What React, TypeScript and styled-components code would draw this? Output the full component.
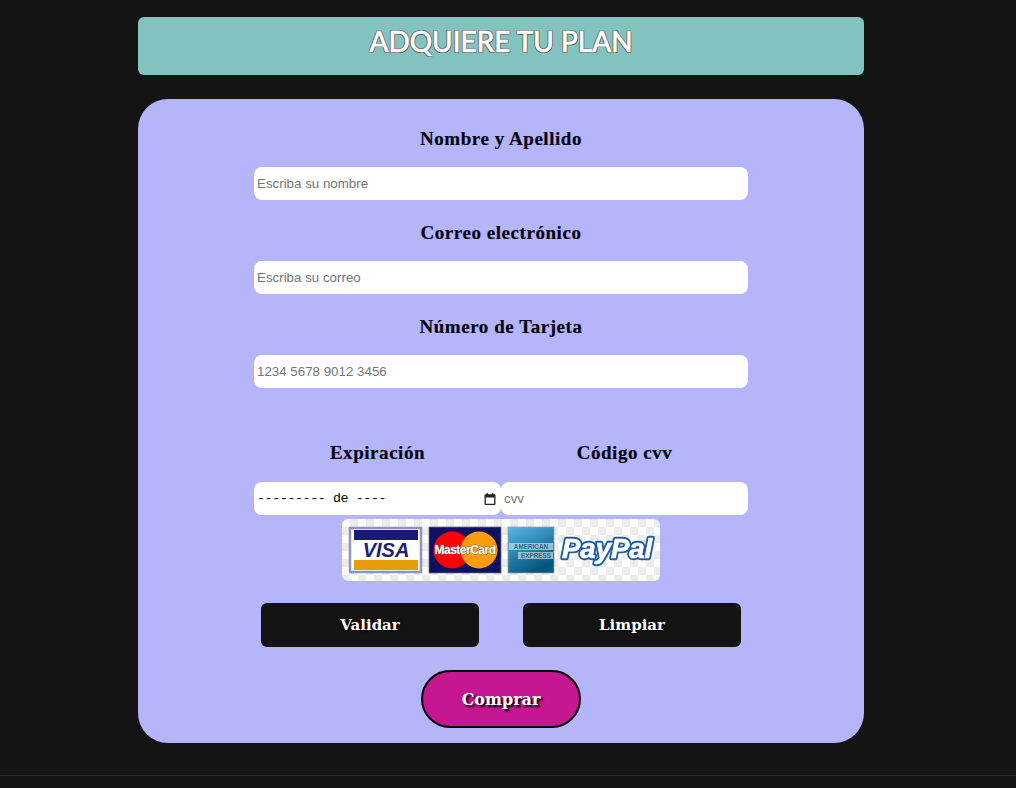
import styled, { createGlobalStyle } from 'styled-components';

const GlobalStyle = createGlobalStyle`
  html, body {
    margin: 0;
    padding: 0;
    background: #141414;
    overflow: hidden;
  }
  * {
    box-sizing: border-box;
  }
`;

const Page = styled.div`
  width: 1016px;
  height: 788px;
  padding-top: 17px;
`;

const Main = styled.main`
  width: 1002px;
  display: flex;
  flex-direction: column;
  align-items: center;
`;

const Banner = styled.header`
  width: 726px;
  height: 58px;
  background: #82c3c0;
  border-radius: 6px;
  text-align: center;
`;

const BannerTitle = styled.h1`
  margin: 0;
  padding-top: 6px;
  font-family: 'Lato', sans-serif;
  font-size: 28px;
  line-height: 36px;
  font-weight: 400;
  color: #fff;
  -webkit-text-stroke: 0.7px #fff;
  text-shadow: 1px 1px 0 #555, -1px 1px 0 #666, 1px -1px 0 #777, -1px -1px 0 #777;
`;

const Card = styled.form`
  width: 726px;
  height: 644px;
  margin-top: 24px;
  padding-top: 30px;
  background: #b5b5fb;
  border-radius: 30px;
  display: flex;
  flex-direction: column;
  align-items: center;
`;

const Field = styled.div`
  width: 494px;
  margin-bottom: 23px;
`;

const Label = styled.label`
  display: block;
  height: 20px;
  margin-bottom: 18px;
  font-family: 'Liberation Serif', serif;
  font-size: 19px;
  line-height: 20px;
  font-weight: 700;
  letter-spacing: 0.55px;
  text-align: center;
  color: #05020f;
  -webkit-text-stroke: 0.2px #05020f;
`;

const TextInput = styled.input`
  display: block;
  width: 100%;
  height: 33px;
  padding: 0 3px;
  border: none;
  outline: none;
  border-radius: 8px;
  background: #fff;
  font-family: 'Liberation Sans', Arial, sans-serif;
  font-size: 13.33px;
  color: #111;

  &::placeholder {
    color: #757575;
    opacity: 1;
  }
`;

const SplitRow = styled.div`
  width: 494px;
  margin-top: 32px;
  display: grid;
  grid-template-columns: 1fr 1fr;
`;

const SplitLabel = styled(Label)`
  margin-bottom: 19px;
`;

const DateBox = styled.div`
  height: 33px;
  padding: 0 4px 0 3px;
  border-radius: 8px;
  background: #fff;
  display: flex;
  align-items: center;
  justify-content: space-between;
`;

const DateMask = styled.span`
  font-family: 'Liberation Mono', monospace;
  font-size: 13.33px;
  letter-spacing: -0.4px;
  color: #000;
  white-space: pre;
`;

const CardsStrip = styled.div`
  width: 318px;
  height: 62px;
  margin-top: 4px;
  border-radius: 6px;
  background-color: #fdfdfd;
  background-image: conic-gradient(#ececec 25%, #fdfdfd 0 50%, #ececec 0 75%, #fdfdfd 0);
  background-size: 16px 16px;
  overflow: hidden;
`;

const CardsArt = styled.svg`
  display: block;
  filter: blur(0.35px);
`;

const ButtonRow = styled.div`
  width: 480px;
  margin-top: 22px;
  display: flex;
  justify-content: space-between;
`;

const DarkButton = styled.button`
  width: 218px;
  height: 44px;
  border: none;
  border-radius: 6px;
  background: #141414;
  color: #fff;
  font-family: 'DejaVu Serif', serif;
  font-size: 15px;
  font-weight: 700;
  text-shadow: 1px 1px 2px #000;
`;

const BuyButton = styled.button`
  width: 160px;
  height: 58px;
  margin-top: 23px;
  border: 2px solid #000;
  border-radius: 29px;
  background: #c5178f;
  color: #fff;
  font-family: 'DejaVu Serif', serif;
  font-size: 16px;
  font-weight: 700;
  text-shadow: 2px 2px 2px #000;
`;

const Footer = styled.footer`
  width: 100%;
  height: 13px;
  margin-top: 32px;
  border-top: 1px solid #2a2c2a;
`;

const CalendarIcon = () => (
  <svg width="14" height="14" viewBox="0 0 14 14" aria-hidden="true">
    <path
      d="M3.5 1v1.2H2.8C2 2.2 1.5 2.8 1.5 3.5v8.2c0 .7.6 1.3 1.3 1.3h8.4c.7 0 1.3-.6 1.3-1.3V3.5c0-.7-.6-1.3-1.3-1.3h-.7V1H9.2v1.2H4.8V1H3.5zM2.8 5.6h8.4v6.1H2.8V5.6z"
      fill="#222"
    />
  </svg>
);

const PaymentLogos = () => (
  <CardsArt width="318" height="62" viewBox="0 0 318 62" aria-label="Tarjetas aceptadas">
    <defs>
      <linearGradient id="amexFill" x1="0" y1="0" x2="0.5" y2="1">
        <stop offset="0" stopColor="#5ab8e8" />
        <stop offset="1" stopColor="#05557f" />
      </linearGradient>
    </defs>

    {/* visa */}
    <rect x="8" y="9" width="71" height="44" fill="#fff" stroke="#8f93b8" strokeWidth="2.5" />
    <rect x="12" y="11" width="64" height="10" fill="#1a1a70" />
    <rect x="12" y="41" width="64" height="10" fill="#e89c05" />
    <text x="44" y="38" textAnchor="middle" fontFamily="Liberation Sans" fontSize="20" fontWeight="700" fontStyle="italic" fill="#1e2070">
      VISA
    </text>

    {/* mastercard */}
    <rect x="87" y="8" width="72" height="46" fill="#0e1160" stroke="#6a6c8c" strokeWidth="0.8" />
    <circle cx="110" cy="31" r="18.5" fill="#f00" />
    <circle cx="137" cy="31" r="18.5" fill="#ff9c0a" />
    <text x="123" y="35" textAnchor="middle" fontFamily="Liberation Sans" fontSize="12" fontWeight="700" letterSpacing="-0.5" fill="#fff" stroke="#666" strokeWidth="0.8" paintOrder="stroke">
      MasterCard
    </text>

    {/* amex */}
    <rect x="166" y="8" width="46" height="46" fill="url(#amexFill)" stroke="#8aa4b4" strokeWidth="0.8" />
    <rect x="167" y="24" width="44" height="7" fill="#c2d6e2" opacity="0.75" />
    <rect x="176" y="33" width="35" height="7" fill="#c2d6e2" opacity="0.75" />
    <text x="189" y="30" textAnchor="middle" fontFamily="Liberation Sans" fontSize="6.4" fontWeight="700" fill="#1f6a96">
      AMERICAN
    </text>
    <text x="194" y="39" textAnchor="middle" fontFamily="Liberation Sans" fontSize="6.4" fontWeight="700" fill="#1f6a96">
      EXPRESS
    </text>

    {/* paypal: thick blue outline behind, white stroked fill on top */}
    <text x="220" y="39" fontFamily="Liberation Sans" fontSize="27.5" fontWeight="700" fontStyle="italic" fill="#1d5ca4" stroke="#1d5ca4" strokeWidth="4.5" strokeLinejoin="round">
      PayPal
    </text>
    <text x="220" y="39" fontFamily="Liberation Sans" fontSize="27.5" fontWeight="700" fontStyle="italic" fill="#fff" stroke="#fff" strokeWidth="0.7">
      PayPal
    </text>
  </CardsArt>
);

const App = () => {
  return (
    <>
      <GlobalStyle />
      <Page>
        <Main>
          <Banner>
            <BannerTitle>ADQUIERE TU PLAN</BannerTitle>
          </Banner>

          <Card>
            <Field>
              <Label>Nombre y Apellido</Label>
              <TextInput type="text" placeholder="Escriba su nombre" />
            </Field>
            <Field>
              <Label>Correo electrónico</Label>
              <TextInput type="text" placeholder="Escriba su correo" />
            </Field>
            <Field>
              <Label>Número de Tarjeta</Label>
              <TextInput type="text" placeholder="1234 5678 9012 3456" />
            </Field>

            <SplitRow>
              <div>
                <SplitLabel>Expiración</SplitLabel>
                <DateBox>
                  <DateMask>--------- de ----</DateMask>
                  <CalendarIcon />
                </DateBox>
              </div>
              <div>
                <SplitLabel>Código cvv</SplitLabel>
                <TextInput type="text" placeholder="cvv" />
              </div>
            </SplitRow>

            <CardsStrip>
              <PaymentLogos />
            </CardsStrip>

            <ButtonRow>
              <DarkButton type="button">Validar</DarkButton>
              <DarkButton type="button">Limpiar</DarkButton>
            </ButtonRow>

            <BuyButton type="button">Comprar</BuyButton>
          </Card>
        </Main>

        <Footer />
      </Page>
    </>
  );
};

export default App;
